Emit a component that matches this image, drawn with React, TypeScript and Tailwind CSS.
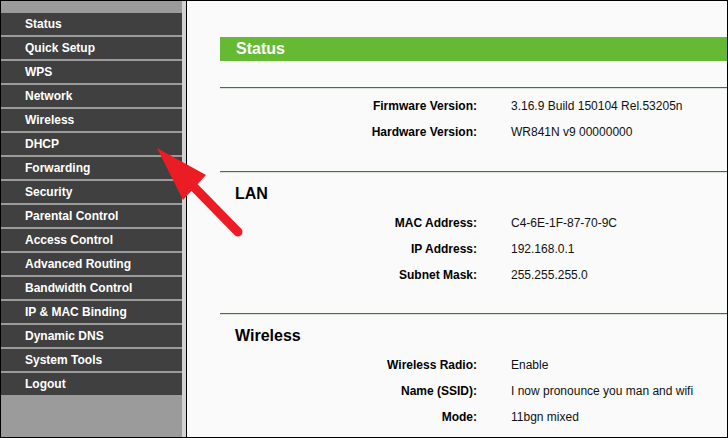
import React from "react"

const menu = [
  "Status",
  "Quick Setup",
  "WPS",
  "Network",
  "Wireless",
  "DHCP",
  "Forwarding",
  "Security",
  "Parental Control",
  "Access Control",
  "Advanced Routing",
  "Bandwidth Control",
  "IP & MAC Binding",
  "Dynamic DNS",
  "System Tools",
  "Logout",
]

type Row = [string, string]

function Rows({ rows }: { rows: Row[] }) {
  return (
    <div className="flex flex-col">
      {rows.map(([label, value]) => (
        <div key={label} className="flex h-[26px] items-center text-[12px]">
          <div className="w-[257px] text-right font-bold text-black">{label}</div>
          <div className="pl-[34px] text-[#111]">{value}</div>
        </div>
      ))}
    </div>
  )
}

function Divider() {
  return <div className="h-[2px] border-t border-[#2d7a4e] bg-[#d6e4da]" />
}

export default function App() {
  return (
    <div
      className="relative flex h-[438px] w-[728px] overflow-hidden border border-black bg-[#fafafa]"
      style={{ fontFamily: '"Liberation Sans", Arial, sans-serif' }}
    >
      {/* left menu */}
      <div className="flex w-[181px] shrink-0 flex-col gap-[2px] bg-[#9b9b9b] pt-[12px]">
        {menu.map((item) => (
          <div
            key={item}
            className="flex h-[22px] items-center bg-[#404040] pl-[24px] text-[12px] font-bold text-white"
          >
            {item}
          </div>
        ))}
      </div>
      <div className="w-[4px] shrink-0 bg-[#d2d2d2]" />
      <div className="w-[1px] shrink-0 bg-black" />

      {/* main panel */}
      <div className="flex-1 pl-[33px] pt-[36px]">
        <div className="flex h-[24px] items-center bg-[#66b933] pl-[16px] text-[16px] font-bold text-white">
          Status
        </div>

        <div className="mt-[26px]">
          <Divider />
          <div className="pb-[26px] pt-[4px]">
            <Rows
              rows={[
                ["Firmware Version:", "3.16.9 Build 150104 Rel.53205n"],
                ["Hardware Version:", "WR841N v9 00000000"],
              ]}
            />
          </div>
        </div>

        <Divider />
        <div className="pb-[25px]">
          <h2 className="pl-[15px] pt-[12px] text-[16px] font-bold leading-[18px] text-black">LAN</h2>
          <div className="mt-[7px]">
            <Rows
              rows={[
                ["MAC Address:", "C4-6E-1F-87-70-9C"],
                ["IP Address:", "192.168.0.1"],
                ["Subnet Mask:", "255.255.255.0"],
              ]}
            />
          </div>
        </div>

        <Divider />
        <div>
          <h2 className="pl-[15px] pt-[12px] text-[16px] font-bold leading-[18px] text-black">Wireless</h2>
          <div className="mt-[7px]">
            <Rows
              rows={[
                ["Wireless Radio:", "Enable"],
                ["Name (SSID):", "I now pronounce you man and wifi"],
                ["Mode:", "11bgn mixed"],
              ]}
            />
          </div>
        </div>
      </div>

      {/* red annotation arrow */}
      <svg className="pointer-events-none absolute left-[-1px] top-[-1px]" width="728" height="438">
        <line x1="192" y1="185" x2="238" y2="232" stroke="#ec1c24" strokeWidth="9" strokeLinecap="round" />
        <polygon points="157,148 206,175 183,200" fill="#ec1c24" />
      </svg>
    </div>
  )
}
